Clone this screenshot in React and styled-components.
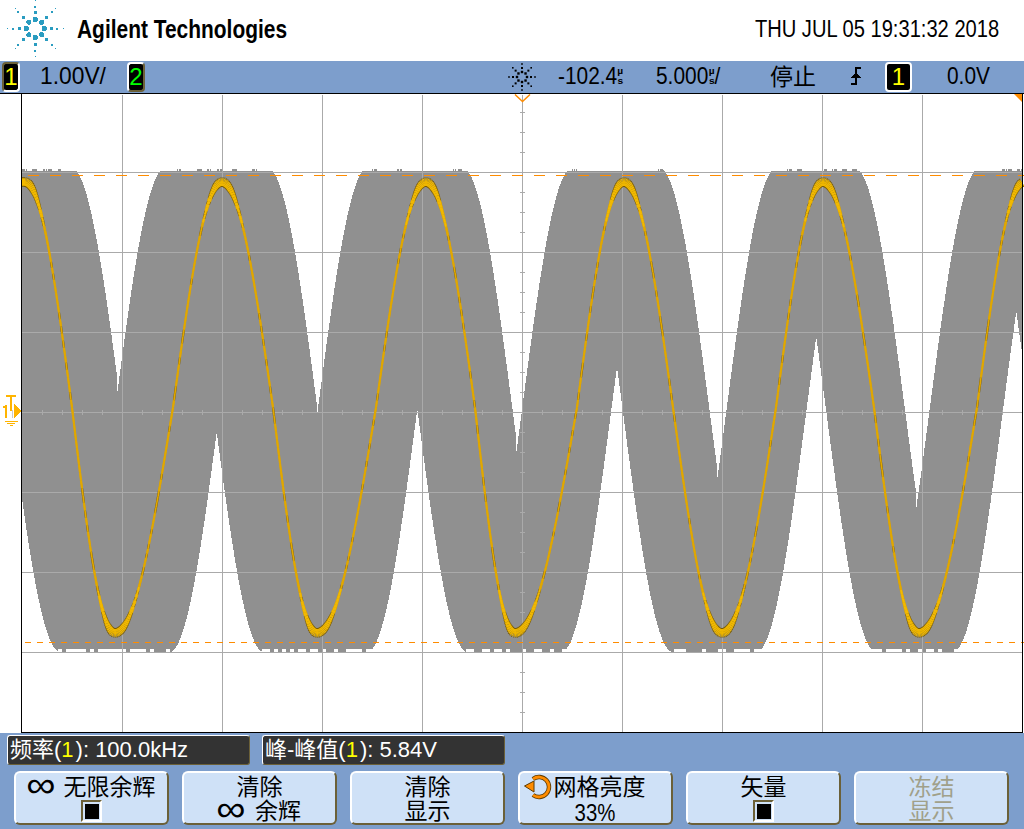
import React from "react";
import styled, { createGlobalStyle } from "styled-components";

const SANS = '"Liberation Sans", "Noto Sans CJK SC", sans-serif';

const Global = createGlobalStyle`
  html, body { margin: 0; padding: 0; background: #fff; }
  #root { width: 1024px; height: 829px; overflow: hidden; }
`;

const Page = styled.div`
  width: 1024px; height: 829px; display: flex; flex-direction: column;
  font-family: ${SANS}; background: #7d9ecc; color: #000;
`;
const Header = styled.header`
  height: 61px; background: #fff; display: flex; align-items: center; flex: none;
`;
const LogoMark = styled.svg`
  width: 70px; height: 61px; flex: none; display: block;
`;
const Brand = styled.div`
  font-size: 26px; font-weight: 700; line-height: 30px; margin-left: 7px; margin-top: -3px;
  transform: scaleX(0.805); transform-origin: left center; white-space: nowrap; width: 209px;
`;
const Clock = styled.div`
  margin-left: auto; margin-right: 25px; font-size: 23px; white-space: nowrap; margin-top: -3px;
  transform: scaleX(0.875); transform-origin: right center;
`;
const InfoBar = styled.div`
  height: 32px; flex: none; display: flex; align-items: center;
  background: #7d9ecc; border-bottom: 1px solid #000; box-sizing: content-box;
`;
const Badge = styled.span`
  width: ${p => p.$w || 14}px; height: 26px; background: #000; border: 2px solid; border-radius: 4px;
  border-color: ${p => p.$lit ? "#6b6038 #fff #fff #6b6038" : p.$olive ? "#fff #6b6038 #6b6038 #fff" : "#fff"};
  color: ${p => p.$c}; font-size: 24px; line-height: 26px; text-align: center; flex: none;
  margin-left: ${p => p.$ml}px; display: block;
`;
const Readout = styled.span`
  margin-left: ${p => p.$ml}px; width: ${p => p.$w}px; flex: none; white-space: nowrap; line-height: 28px;
  display: inline-flex; align-items: center; font-size: 24px; margin-top: -3px;
  transform: scaleX(${p => p.$sx || 0.87}); transform-origin: left center;
`;
const Status = styled.span`
  margin-left: ${p => p.$ml}px; font-size: 23px; line-height: 30px; flex: none; white-space: nowrap;
`;
const Unit = styled.span`
  display: inline-flex; flex-direction: column; align-items: center; width: 11px; font-size: 9px; line-height: 10.4px;
  font-weight: 700; margin: 1px 0 0 1px; transform: scaleX(1.3);
`;
const Glyph = styled.svg`
  display: block; flex: none; margin-left: ${p => p.$ml || 0}px; margin-top: ${p => p.$mt || 0}px;
`;
const Scope = styled.div`
  height: 639px; flex: none; display: flex; background: #fff;
`;
const Gutter = styled.div`
  width: 21px; flex: none; background: #fff; display: flex; align-items: flex-start;
`;
const Plot = styled.svg`
  width: 1003px; height: 639px; display: block; flex: none;
`;
const Footer = styled.div`
  flex: 1; display: flex; flex-direction: column; background: #7d9ecc;
`;
const Measures = styled.div`
  display: flex; gap: 12px; padding: 2px 0 0 7px; height: 30px;
`;
const Measure = styled.div`
  width: 243px; height: 30px; box-sizing: border-box; background: #333; color: #fff;
  border: 1px solid; border-color: #fff #6b6038 #6b6038 #fff; border-radius: 3px;
  font-size: 22px; line-height: 27px; padding-left: 2px; white-space: nowrap;
`;
const Yellow = styled.span` color: #ff0; margin-right: 2px; `;
const Softkeys = styled.div`
  display: flex; gap: 13px; padding: 6px 0 0 14px;
`;
const Softkey = styled.div`
  width: 155px; height: 54px; box-sizing: border-box; background: #cfe1f7;
  border: 2px solid; border-color: #fff #6b6038 #6b6038 #fff; border-radius: 6px;
  display: flex; flex-direction: column; align-items: center; justify-content: flex-start;
  font-size: 23px; line-height: 24px; padding-top: 2px; white-space: nowrap;
  color: ${p => p.$off ? "#a0a08a" : "#000"};
`;
const KeyRow = styled.div`
  display: flex; align-items: center; justify-content: center; gap: ${p => p.$gap || 0}px; height: 24px;
  margin-right: ${p => p.$shift || 0}px;
`;
const Infin = styled.span`
  font-size: 36px; line-height: 24px; display: block; margin-top: -4px;
  width: 26px; text-align: center; transform: scaleX(1.14);
`;
const Percent = styled.span`
  font-size: 24px; display: block; transform: scaleX(0.85); margin-top: 3px;
`;
const Check = styled.span`
  width: 21px; height: 22px; box-sizing: border-box; display: flex; align-items: center; justify-content: center;
  border: 2px solid; border-color: #6b6038 #fff #fff #6b6038; margin-top: 1px;
  &::after { content: ""; width: 14px; height: 15px; background: #000; display: block; }
`;

/* ------ waveform geometry, in plot coordinates (origin at page x=21, y=94) ------ */
const OX = 21, OY = 94;
const MID = 410, AMP = 242;
const hash = n => { const s = Math.sin(n * 127.1 + 11.7) * 43758.5453; return s - Math.floor(s); };
const dOf = ay => Math.asin(Math.max(-1, Math.min(1, (MID - ay) / AMP))) * 100 / Math.PI;
const wave = deg => AMP * Math.sin(deg * Math.PI / 100);

function topGap([ax, ay]) {
  const d = dOf(ay);
  const xl = ax + d + 2, xr = ax - d;
  const pts = [];
  for (let x = xl - 50; x <= ax; x += 1) pts.push([x, MID - wave(xl - x)]);
  pts.push([ax, ay]);
  for (let x = Math.ceil(ax); x <= xr + 50; x += 1) pts.push([x, MID - wave(x - xr)]);
  pts.push([xr + 50, 160], [xl - 50, 160]);
  return pts;
}
function bottomGap([ax, ay]) {
  const d = dOf(ay);
  const xl = ax - d, xr = ax + d;
  const pts = [];
  for (let x = xl - 50; x <= ax; x += 1) pts.push([x, MID + wave(xl - x)]);
  pts.push([ax, ay]);
  for (let x = Math.ceil(ax); x <= xr + 50; x += 1) pts.push([x, MID + wave(x - xr)]);
  pts.push([xr + 50, 660], [xl - 50, 660]);
  return pts;
}
const TOPS = [[117.3, 393], [316.7, 418], [516.3, 453], [717, 481], [916.3, 508]];
const BOTS = [[16, 455], [216.7, 432], [417.3, 409], [617, 367], [816.3, 337], [1016.3, 312]];
const toPts = a => a.map(([x, y]) => `${(x - OX).toFixed(1)},${(y - OY).toFixed(1)}`).join(" ");

/* the trace: extremes and zero crossings, read off the reference; quarter sines between */
const TC = 407.5, TA = 225.5;
const KNOTS = [
  [25, -1], [72, 0], [115, 1], [173, 0], [222, -1], [273, 0], [317, 1], [376, 0], [426, -1], [475, 0], [515, 1],
  [577, 0], [624, -1], [673, 0], [722, 1], [776, 0], [823, -1], [874, 0], [919, 1], [977, 0], [1024, -1],
];
function traceAt(x) {
  for (let i = 0; i < KNOTS.length - 1; i++) {
    const [x0, v0] = KNOTS[i], [x1, v1] = KNOTS[i + 1];
    if (x >= x0 && x <= x1) {
      const t = (x - x0) / (x1 - x0);
      const u = v0 === 0 ? v1 * Math.sin(t * Math.PI / 2) : v0 * Math.cos(t * Math.PI / 2);
      return { y: TC + TA * u, e: Math.pow(Math.abs(u), 14) };
    }
  }
  return { y: TC - TA, e: 1 };
}
const SEGS = [];
for (let x = 22; x < 1022; x++) {
  const a = traceAt(x), b = traceAt(x + 1);
  SEGS.push({ x, y0: a.y, y1: b.y, e: a.e });
}

const gridX = [122, 222, 322, 422, 522, 622, 722, 822, 922];
const gridY = [172, 252, 332, 412, 492, 572, 652];
const ticksX = []; for (let x = 42; x < 1022; x += 20) if ((x - 22) % 100 !== 0) ticksX.push(x);
const ticksY = []; for (let y = 112; y < 732; y += 20) if ((y - 12) % 80 !== 0) ticksY.push(y);
const dashesTop = []; for (let x = 28; x < 1022; x += 22) dashesTop.push(x);
const dashesBot = []; for (let x = 25; x < 1022; x += 12) dashesBot.push(x);

const COLS = Array.from({ length: 1000 }, (_, i) => i);

const Waveform = () => (
  <Plot viewBox="0 0 1003 639">
    <rect x="0" y="0" width="1003" height="639" fill="#fff" />
    <g shapeRendering="crispEdges">
      <rect x={1} y={169 - OY} width={1000} height={484} fill="#909090" />
      {COLS.map(i => {
        const topOpen = hash(Math.floor(i / 5) + 7000) > 0.3 || hash(i) < 0.3;
        const botOpen = hash(Math.floor(i / 4) + 9000) > 0.45;
        return (
          <React.Fragment key={i}>
            {topOpen && <rect x={i + 1} y={169 - OY} width={1} height={2} fill="#fff" />}
            {botOpen && <rect x={i + 1} y={649 - OY} width={1} height={4} fill="#fff" />}
          </React.Fragment>
        );
      })}
      {TOPS.map((g, i) => <polygon key={i} points={toPts(topGap(g))} fill="#fff" />)}
      {BOTS.map((g, i) => <polygon key={i} points={toPts(bottomGap(g))} fill="#fff" />)}
      {gridY.map(y => <rect key={y} x={1} y={y - OY} width={1000} height={1} fill="#aaa" />)}
      {gridX.map(x => <rect key={x} x={x - OX} y={1} width={1} height={637} fill="#aaa" />)}
      {ticksX.map(x => <rect key={x} x={x - OX} y={410 - OY} width={1} height={5} fill="#aaa" />)}
      {ticksY.map(y => <rect key={y} x={520 - OX} y={y - OY} width={5} height={1} fill="#aaa" />)}
    </g>
    <g fill="none" strokeLinecap="butt">
      {SEGS.map(s => (
        <line key={s.x} x1={s.x - OX} x2={s.x + 1 - OX} y1={s.y0 - OY} y2={s.y1 - OY}
          stroke={hash(s.x + 500) < 0.3 || s.e > 0.3 ? "#7a5c00" : "#d9a200"} strokeWidth={2.2 + s.e * 7.5} />
      ))}
      {SEGS.map(s => (
        <line key={s.x} x1={s.x - OX} x2={s.x + 1 - OX} y1={s.y0 - OY} y2={s.y1 - OY}
          stroke={s.e > 0.05 ? "#f2b900" : "#e2a800"} strokeWidth={1.6 + s.e * 6} />
      ))}
    </g>
    <g shapeRendering="crispEdges" fill="#ff8c00">
      {dashesTop.map(x => <rect key={x} x={x - OX} y={175 - OY} width={11} height={1} />)}
      {dashesBot.map(x => <rect key={x} x={x - OX} y={642 - OY} width={6} height={1} />)}
    </g>
    <g shapeRendering="crispEdges" fill="#000">
      <rect x="0" y="0" width="1" height="639" />
      <rect x="0" y="638" width="1002" height="1" />
      <rect x="1001" y="0" width="1" height="639" />
    </g>
    <path d="M494 0.5 L501.5 7.5 L509 0.5" fill="none" stroke="#ff8c00" strokeWidth="1.5" />
    <path d="M993 0 H1001 V8 Z" fill="#ff8c00" />
  </Plot>
);

const Burst = () => {
  const dots = [];
  for (let i = 0; i < 8; i++) {
    const a = i * Math.PI / 4, cx = 35.3, cy = 28.5;
    const p = r => [cx + r * Math.cos(a), cy + r * Math.sin(a)];
    const [x1, y1] = p(9);
    dots.push(<circle key={"a" + i} cx={x1} cy={y1} r={2.6} fill="#2a9cc0" />);
    const [x2, y2] = p(16);
    dots.push(<rect key={"b" + i} x={x2 - 1.5} y={y2 - 1.5} width={3} height={3} fill="#2a9cc0" />);
    const [x3, y3] = p(i % 2 ? 24 : 22);
    dots.push(<rect key={"c" + i} x={x3 - 1} y={y3 - 1} width={2} height={2} fill="#2a9cc0" />);
    const [x4, y4] = p(28);
    dots.push(<rect key={"d" + i} x={x4 - .5} y={y4 - .5} width={1} height={1} fill="#2a9cc0" />);
  }
  return <LogoMark viewBox="0 0 70 61" shapeRendering="crispEdges">{dots}</LogoMark>;
};

const SmallBurst = () => {
  const parts = [];
  for (let i = 0; i < 8; i++) {
    const a = i * Math.PI / 4;
    [[5, 1.2], [9, 1], [13, .8]].forEach(([r, s], k) => {
      parts.push(<rect key={i + "-" + k} x={14 + r * Math.cos(a) - s} y={14 + r * Math.sin(a) - s} width={s * 2} height={s * 2} fill="#000" />);
    });
  }
  return <Glyph $ml={363} width="28" height="28" viewBox="0 0 28 28">{parts}</Glyph>;
};

const GroundMark = () => (
  <Glyph $mt={300} width="21" height="34" viewBox="0 0 21 34" stroke="#ffb400" fill="none" shapeRendering="crispEdges">
    <path d="M6 2h10M11 2v15" strokeWidth="2" />
    <path d="M6 11v13M3 13h3" strokeWidth="2" />
    <path d="M12 16v8" stroke="#ccc" strokeWidth="1" />
    <path d="M14 10l7 7-7 7z" fill="#ffb400" stroke="none" />
    <path d="M5 27h13M7 29h8M10 31h3" strokeWidth="1" />
  </Glyph>
);

const Dial = () => (
  <svg width="30" height="26" viewBox="0 0 30 26" fill="none">
    <path d="M9 5 A10 10 0 1 1 9 21" stroke="#5c3a00" strokeWidth="4.4" />
    <path d="M9 5 A10 10 0 1 1 9 21" stroke="#ff8c00" strokeWidth="2.8" />
    <path d="M0.5 12 L10 7 V18 Z" fill="#ff8c00" stroke="#5c3a00" />
  </svg>
);

const Edge = () => (
  <Glyph $ml={35} $mt={-3} width="10" height="18" viewBox="0 0 10 18" stroke="#000" fill="none" shapeRendering="crispEdges">
    <path d="M0 17h5V1h5" strokeWidth="1.6" />
    <path d="M0 11 L5 5 L10 11 Z" fill="#000" stroke="none" />
  </Glyph>
);

export default function App() {
  return (
    <Page>
      <Global />
      <Header>
        <Burst />
        <Brand>Agilent Technologies</Brand>
        <Clock>THU JUL 05 19:31:32 2018</Clock>
      </Header>
      <InfoBar>
        <Badge $c="#ff0" $lit $ml={2}>1</Badge>
        <Readout $ml={20} $w={67} $sx={0.95}>1.00V/</Readout>
        <Badge $c="#0f0" $olive $ml={20}>2</Badge>
        <SmallBurst />
        <Readout $ml={22} $w={70}>-102.4<Unit><span>µ</span><span>s</span></Unit></Readout>
        <Readout $ml={28} $w={74}>5.000<Unit><span>µ</span><span>s</span></Unit>/</Readout>
        <Status $ml={40}>停止</Status>
        <Edge />
        <Badge $c="#ff0" $w={23} $ml={24}>1</Badge>
        <Readout $ml={35} $w={43}>0.0V</Readout>
      </InfoBar>
      <Scope>
        <Gutter><GroundMark /></Gutter>
        <Waveform />
      </Scope>
      <Footer>
        <Measures>
          <Measure>频率(<Yellow>1</Yellow>): 100.0kHz</Measure>
          <Measure>峰-峰值(<Yellow>1</Yellow>): 5.84V</Measure>
        </Measures>
        <Softkeys>
          <Softkey>
            <KeyRow $gap={10}><Infin>∞</Infin>无限余辉</KeyRow>
            <Check />
          </Softkey>
          <Softkey>
            <KeyRow>清除</KeyRow>
            <KeyRow $gap={11}><Infin>∞</Infin>余辉</KeyRow>
          </Softkey>
          <Softkey>
            <KeyRow>清除</KeyRow>
            <KeyRow>显示</KeyRow>
          </Softkey>
          <Softkey>
            <KeyRow $shift={22}><Dial />网格亮度</KeyRow>
            <KeyRow><Percent>33%</Percent></KeyRow>
          </Softkey>
          <Softkey>
            <KeyRow>矢量</KeyRow>
            <Check />
          </Softkey>
          <Softkey $off>
            <KeyRow>冻结</KeyRow>
            <KeyRow>显示</KeyRow>
          </Softkey>
        </Softkeys>
      </Footer>
    </Page>
  );
}
